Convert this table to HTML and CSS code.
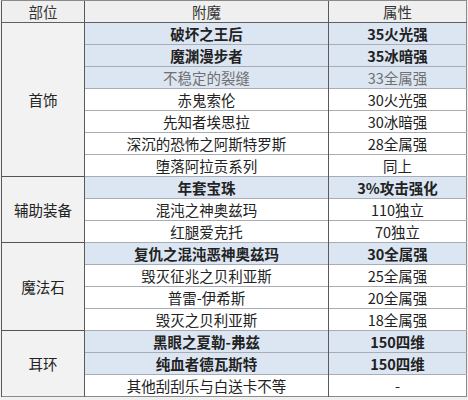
FILE: index.html
```html
<!DOCTYPE html>
<html lang="zh">
<head>
<meta charset="utf-8">
<link rel="stylesheet" href="styles.css">
</head>
<body>
<table class="tbl">
  <colgroup>
    <col class="c1"><col class="c2"><col class="c3">
  </colgroup>
  <thead>
    <tr class="head"><th>部位</th><th>附魔</th><th>属性</th></tr>
  </thead>
  <tbody class="grp">
    <tr class="hl b"><td class="part" rowspan="7">首饰</td><td>破坏之王后</td><td>35火光强</td></tr>
    <tr class="hl b"><td>魔渊漫步者</td><td>35冰暗强</td></tr>
    <tr class="hl dim"><td>不稳定的裂缝</td><td>33全属强</td></tr>
    <tr><td>赤鬼索伦</td><td>30火光强</td></tr>
    <tr><td>先知者埃思拉</td><td>30冰暗强</td></tr>
    <tr><td>深沉的恐怖之阿斯特罗斯</td><td>28全属强</td></tr>
    <tr><td>堕落阿拉贡系列</td><td>同上</td></tr>
  </tbody>
  <tbody class="grp">
    <tr class="hl b"><td class="part" rowspan="3">辅助装备</td><td>年套宝珠</td><td>3%攻击强化</td></tr>
    <tr><td>混沌之神奥兹玛</td><td>110独立</td></tr>
    <tr><td>红腿爱克托</td><td>70独立</td></tr>
  </tbody>
  <tbody class="grp">
    <tr class="hl b"><td class="part" rowspan="4">魔法石</td><td>复仇之混沌恶神奥兹玛</td><td>30全属强</td></tr>
    <tr><td>毁灭征兆之贝利亚斯</td><td>25全属强</td></tr>
    <tr><td>普雷-伊希斯</td><td>20全属强</td></tr>
    <tr><td>毁灭之贝利亚斯</td><td>18全属强</td></tr>
  </tbody>
  <tbody class="grp">
    <tr class="hl b"><td class="part" rowspan="3">耳环</td><td>黑眼之夏勒-弗兹</td><td>150四维</td></tr>
    <tr class="hl b"><td>纯血者德瓦斯特</td><td>150四维</td></tr>
    <tr><td>其他刮刮乐与白送卡不等</td><td>-</td></tr>
  </tbody>
</table>
</body>
</html>
```
FILE: styles.css
```css
html, body {
  margin: 0;
  padding: 0;
  background: #f0f0f0;
}
body {
  font-family: "Noto Sans CJK SC", "Noto Sans", sans-serif;
  font-size: 14.5px;
  color: #222;
}
.tbl {
  border-collapse: collapse;
  margin: 0 0 0 1px;
  width: 465px;
  table-layout: fixed;
  background: #fff;
  border: 1px solid #8a8a8a;
}
.c1 { width: 83px; }
.c2 { width: 244px; }
.c3 { width: 138px; }
.tbl th, .tbl td {
  height: 21px;
  padding: 0 4px;
  text-align: center;
  line-height: 20px;
  border-top: 1px solid #a8adb5;
  border-left: 1.5px solid #5a5a5a;
  white-space: nowrap;
  overflow: hidden;
}
.head th {
  background: #efefef;
  font-weight: normal;
  color: #333;
  border-top: 1px solid #8a8a8a;
  border-bottom: 1.5px solid #5f5f5f;
}
.grp {
  border-top: 1.5px solid #555;
}
.tbl td.part {
  background: #f2f2f2;
  color: #222;
  border-top: 1.5px solid #555;
}
.hl td {
  background: #dce6f2;
}
.hl td.part {
  background: #f2f2f2;
}
.b td {
  font-weight: bold;
}
.b td.part {
  font-weight: normal;
}
.dim td {
  color: #707070;
}
.dim td.part {
  color: #222;
}
```
